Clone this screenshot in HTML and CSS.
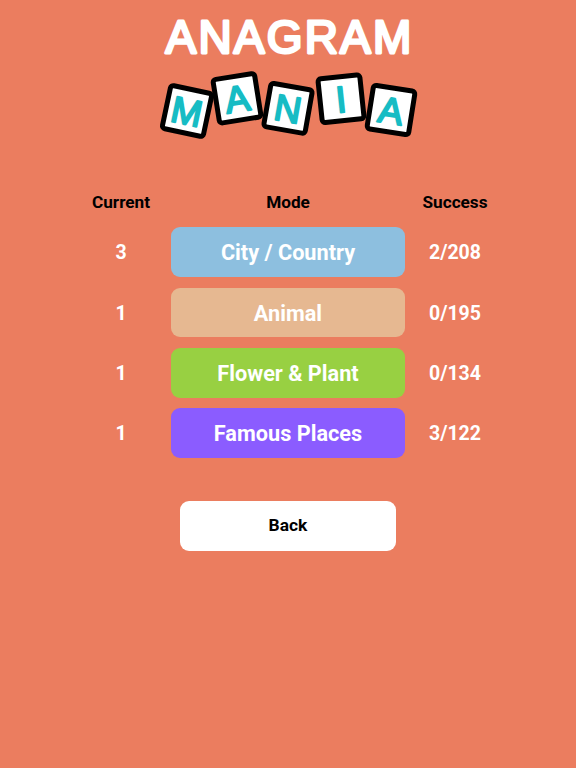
FILE: index.html
```html
<!DOCTYPE html>
<html lang="en">
<head>
    <meta charset="UTF-8">
    <meta name="viewport" content="width=device-width, initial-scale=1.0">
    <title>Anagram Mania</title>
    <link rel="stylesheet" href="styles.css">
</head>
<body>
    <!-- Logo: letters stay real text, stroked so the corners come out round -->
    <svg class="logo" viewBox="0 0 276 135" width="276" height="135">
        <text class="logo-title" x="139.5" y="42.5">ANAGRAM</text>

        <g transform="translate(37 101) rotate(12)">
            <rect class="tile" x="-21" y="-22" width="42" height="44" rx="3"></rect>
            <text class="tile-letter" y="13.5">M</text>
        </g>
        <g transform="translate(87 88.3) rotate(-9)">
            <rect class="tile" x="-21" y="-22" width="42" height="44" rx="3"></rect>
            <text class="tile-letter" y="13.5">A</text>
        </g>
        <g transform="translate(138 98.3) rotate(10)">
            <rect class="tile" x="-21" y="-22" width="42" height="44" rx="3"></rect>
            <text class="tile-letter" y="13.5">N</text>
        </g>
        <g transform="translate(191 88.7) rotate(-6)">
            <rect class="tile" x="-21" y="-22" width="42" height="44" rx="3"></rect>
            <text class="tile-letter" y="13.5">I</text>
        </g>
        <g transform="translate(241 100) rotate(9)">
            <rect class="tile" x="-21" y="-22" width="42" height="44" rx="3"></rect>
            <text class="tile-letter" y="13.5">A</text>
        </g>
    </svg>

    <div class="table">
        <div class="head">Current</div>
        <div class="head">Mode</div>
        <div class="head">Success</div>

        <div class="num">3</div>
        <div class="mode city">City / Country</div>
        <div class="num">2/208</div>

        <div class="num">1</div>
        <div class="mode animal">Animal</div>
        <div class="num">0/195</div>

        <div class="num">1</div>
        <div class="mode flower">Flower &amp; Plant</div>
        <div class="num">0/134</div>

        <div class="num">1</div>
        <div class="mode places">Famous Places</div>
        <div class="num">3/122</div>
    </div>

    <button class="back">Back</button>
</body>
</html>
```

FILE: styles.css
```css
body {
    margin: 0;
    height: 768px;
    background: #eb7d5f;
    font-family: Roboto, "Liberation Sans", sans-serif;
    display: flex;
    flex-direction: column;
    align-items: center;
    overflow: hidden;
}

.logo {
    display: block;
    flex: none;
    margin-top: 10px;
}

.logo-title {
    font-family: "Liberation Sans", Arial, sans-serif;
    font-size: 46px;
    letter-spacing: 2.2px;
    text-anchor: middle;
    fill: #fff;
    stroke: #fff;
    stroke-width: 2.8px;
    stroke-linejoin: round;
}

.tile {
    fill: #fff;
    stroke: #000;
    stroke-width: 5px;
}

.tile-letter {
    font-family: "Liberation Sans", Arial, sans-serif;
    font-size: 37px;
    text-anchor: middle;
    fill: #17bcc4;
    stroke: #17bcc4;
    stroke-width: 2px;
    stroke-linejoin: round;
}

.table {
    display: grid;
    grid-template-columns: 100px 234px 100px;
    grid-template-rows: 29.4px repeat(4, 49.5px);
    row-gap: 10.8px;
    margin-top: 42.3px;
    text-align: center;
    align-items: center;
}

.head {
    font-size: 17.2px;
    font-weight: 700;
    color: #000;
}

.num {
    padding-top: 1px;
    font-size: 19.5px;
    font-weight: 700;
    color: #fff;
}

.mode {
    height: 49.5px;
    line-height: 51px;
    border-radius: 9px;
    font-size: 21.7px;
    font-weight: 700;
    color: #fff;
}

.city { background: #8dbfdf; }
.animal { background: #e6b891; }
.flower { background: #98d042; }
.places { background: #8b5cff; }

.back {
    width: 216px;
    height: 50px;
    margin-top: 43px;
    padding: 0 0 2px;
    border: none;
    border-radius: 9px;
    background: #fff;
    color: #000;
    font-family: Roboto, "Liberation Sans", sans-serif;
    font-size: 17.4px;
    font-weight: 700;
}
```
